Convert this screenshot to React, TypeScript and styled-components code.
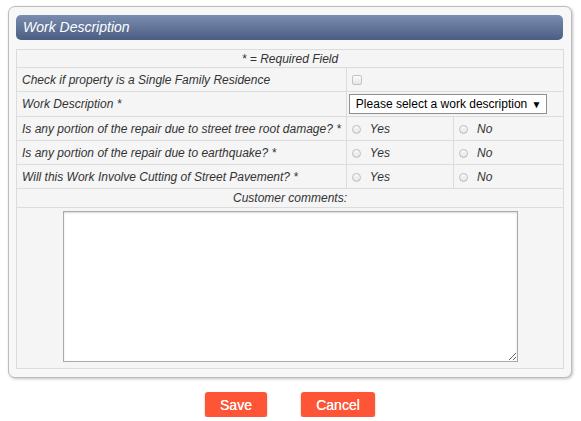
import React from 'react';
import styled, { createGlobalStyle } from 'styled-components';

const GlobalStyle = createGlobalStyle`
  html, body {
    margin: 0;
    padding: 0;
    background: #ffffff;
    font-family: "Liberation Sans", Arial, sans-serif;
  }
`;

const Page = styled.div`
  width: 581px;
  padding: 6px 9px 0 8px;
  box-sizing: border-box;
`;

const Panel = styled.section`
  border: 1px solid #bdbdbd;
  border-radius: 7px;
  background: #f7f7f7;
  box-shadow: 1px 1px 3px rgba(0, 0, 0, 0.25);
  padding: 8px 8px 8px 7px;
`;

const PanelHeader = styled.h2`
  margin: 0 0 9px;
  height: 25px;
  line-height: 25px;
  padding: 0 7px;
  border-radius: 5px;
  background: linear-gradient(#7a8db0, #4b5d82);
  color: #ffffff;
  font-size: 14px;
  font-style: italic;
  font-weight: normal;
`;

const Grid = styled.table`
  width: 548px;
  border-collapse: collapse;
  background: #f5f5f5;
  font-size: 12px;
  font-style: italic;
  color: #333333;
`;

const Cell = styled.td<{ $center?: boolean; $h?: number }>`
  border: 1px solid #dcdcdc;
  padding: 0 5px;
  height: ${p => p.$h ?? 23}px;
  text-align: ${p => (p.$center ? 'center' : 'left')};
  vertical-align: middle;
  white-space: nowrap;
`;

const Check = styled.span`
  display: inline-block;
  width: 8px;
  height: 8px;
  border: 1px solid #c4c4c4;
  border-radius: 2px;
  background: linear-gradient(#fbfbfb, #e6e6e6);
  vertical-align: middle;
`;

const Radio = styled.span`
  display: inline-block;
  width: 7px;
  height: 7px;
  border: 1px solid #bdbdbd;
  border-radius: 50%;
  background: linear-gradient(#fbfbfb, #e4e4e4);
  margin-right: 9px;
  vertical-align: -1px;
`;

const Select = styled.div`
  display: inline-block;
  border: 1px solid #8f8f8f;
  background: #ffffff;
  color: #000000;
  font-style: normal;
  font-size: 12px;
  height: 18px;
  line-height: 18px;
  padding: 0 4px 0 6px;
  margin-left: -3px;
`;

const Arrow = styled.span`
  font-size: 10px;
  margin-left: 1px;
`;

const Comments = styled.textarea`
  display: block;
  margin: 2px auto 6px;
  width: 455px;
  height: 151px;
  box-sizing: border-box;
  border: 1px solid #a9a9a9;
  box-shadow: inset 0 1px 2px rgba(0, 0, 0, 0.15);
  background: #ffffff;
`;

const Actions = styled.div`
  display: flex;
  justify-content: center;
  gap: 34px;
  margin-top: 14px;
`;

const Button = styled.button<{ $w: number }>`
  width: ${p => p.$w}px;
  height: 25px;
  border: none;
  border-radius: 3px;
  background: #fd5536;
  box-shadow: 0 1px 2px rgba(0, 0, 0, 0.35);
  color: #ffffff;
  font-family: "Liberation Sans", Arial, sans-serif;
  font-size: 14px;
  font-weight: normal;
  text-shadow: 0 0 0.4px #ffffff;
`;

const YesNo = () => (
  <>
    <Cell><Radio />Yes</Cell>
    <Cell><Radio />No</Cell>
  </>
);

const questions = [
  'Is any portion of the repair due to street tree root damage? *',
  'Is any portion of the repair due to earthquake? *',
  'Will this Work Involve Cutting of Street Pavement? *',
];

const App = () => (
  <Page>
    <GlobalStyle />
    <Panel>
      <PanelHeader>Work Description</PanelHeader>
      <Grid>
        <colgroup>
          <col style={{ width: 329 }} />
          <col style={{ width: 108 }} />
          <col style={{ width: 111 }} />
        </colgroup>
        <tbody>
          <tr><Cell colSpan={3} $center $h={17}>* = Required Field</Cell></tr>
          <tr>
            <Cell $h={22}>Check if property is a Single Family Residence</Cell>
            <Cell colSpan={2}><Check /></Cell>
          </tr>
          <tr>
            <Cell $h={24}>Work Description *</Cell>
            <Cell colSpan={2}>
              <Select>Please select a work description <Arrow>▼</Arrow></Select>
            </Cell>
          </tr>
          {questions.map(q => (
            <tr key={q}>
              <Cell>{q}</Cell>
              <YesNo />
            </tr>
          ))}
          <tr><Cell colSpan={3} $center $h={18}>Customer comments:</Cell></tr>
          <tr>
            <Cell colSpan={3} $h={160}><Comments /></Cell>
          </tr>
        </tbody>
      </Grid>
    </Panel>
    <Actions>
      <Button $w={62}>Save</Button>
      <Button $w={74}>Cancel</Button>
    </Actions>
  </Page>
);

export default App;
